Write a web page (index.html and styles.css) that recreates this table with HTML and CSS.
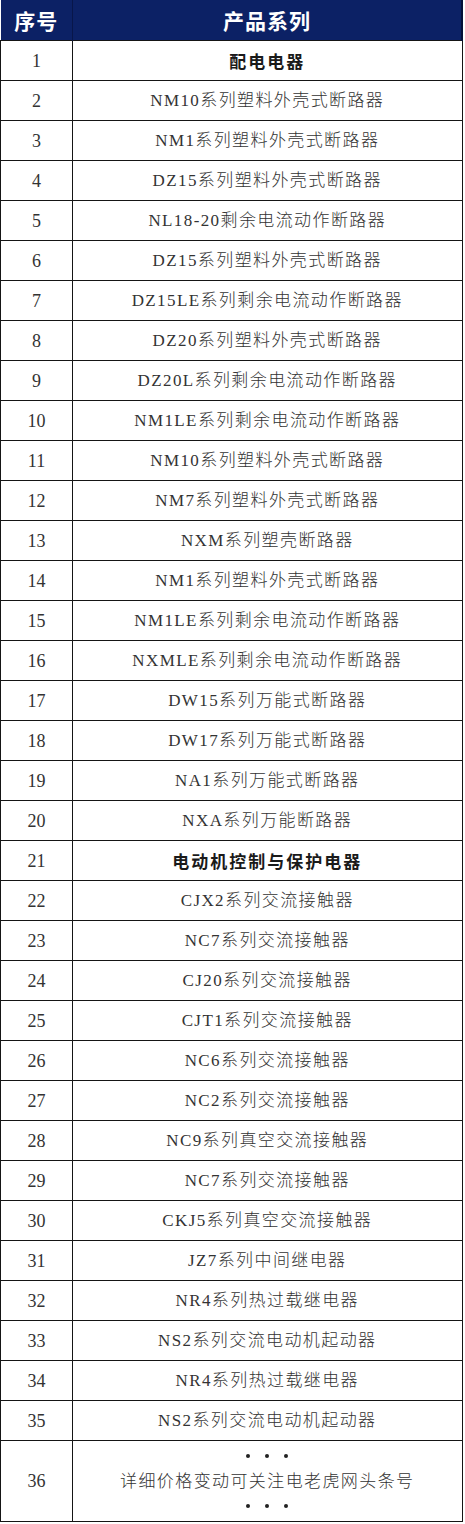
FILE: index.html
```html
<!DOCTYPE html>
<html lang="zh-CN">
<head>
<meta charset="utf-8">
<title>产品系列</title>
<link rel="stylesheet" href="styles.css">
</head>
<body>
<table class="tbl">
  <colgroup><col class="c-no"><col class="c-name"></colgroup>
  <thead>
    <tr class="head"><th>序号</th><th>产品系列</th></tr>
  </thead>
  <tbody>
    <tr><td class="no">1</td><td class="name cat">配电电器</td></tr>
    <tr><td class="no">2</td><td class="name">NM10系列塑料外壳式断路器</td></tr>
    <tr><td class="no">3</td><td class="name">NM1系列塑料外壳式断路器</td></tr>
    <tr><td class="no">4</td><td class="name">DZ15系列塑料外壳式断路器</td></tr>
    <tr><td class="no">5</td><td class="name">NL18-20剩余电流动作断路器</td></tr>
    <tr><td class="no">6</td><td class="name">DZ15系列塑料外壳式断路器</td></tr>
    <tr><td class="no">7</td><td class="name">DZ15LE系列剩余电流动作断路器</td></tr>
    <tr><td class="no">8</td><td class="name">DZ20系列塑料外壳式断路器</td></tr>
    <tr><td class="no">9</td><td class="name">DZ20L系列剩余电流动作断路器</td></tr>
    <tr><td class="no">10</td><td class="name">NM1LE系列剩余电流动作断路器</td></tr>
    <tr><td class="no">11</td><td class="name">NM10系列塑料外壳式断路器</td></tr>
    <tr><td class="no">12</td><td class="name">NM7系列塑料外壳式断路器</td></tr>
    <tr><td class="no">13</td><td class="name">NXM系列塑壳断路器</td></tr>
    <tr><td class="no">14</td><td class="name">NM1系列塑料外壳式断路器</td></tr>
    <tr><td class="no">15</td><td class="name">NM1LE系列剩余电流动作断路器</td></tr>
    <tr><td class="no">16</td><td class="name">NXMLE系列剩余电流动作断路器</td></tr>
    <tr><td class="no">17</td><td class="name">DW15系列万能式断路器</td></tr>
    <tr><td class="no">18</td><td class="name">DW17系列万能式断路器</td></tr>
    <tr><td class="no">19</td><td class="name">NA1系列万能式断路器</td></tr>
    <tr><td class="no">20</td><td class="name">NXA系列万能断路器</td></tr>
    <tr><td class="no">21</td><td class="name cat">电动机控制与保护电器</td></tr>
    <tr><td class="no">22</td><td class="name">CJX2系列交流接触器</td></tr>
    <tr><td class="no">23</td><td class="name">NC7系列交流接触器</td></tr>
    <tr><td class="no">24</td><td class="name">CJ20系列交流接触器</td></tr>
    <tr><td class="no">25</td><td class="name">CJT1系列交流接触器</td></tr>
    <tr><td class="no">26</td><td class="name">NC6系列交流接触器</td></tr>
    <tr><td class="no">27</td><td class="name">NC2系列交流接触器</td></tr>
    <tr><td class="no">28</td><td class="name">NC9系列真空交流接触器</td></tr>
    <tr><td class="no">29</td><td class="name">NC7系列交流接触器</td></tr>
    <tr><td class="no">30</td><td class="name">CKJ5系列真空交流接触器</td></tr>
    <tr><td class="no">31</td><td class="name">JZ7系列中间继电器</td></tr>
    <tr><td class="no">32</td><td class="name">NR4系列热过载继电器</td></tr>
    <tr><td class="no">33</td><td class="name">NS2系列交流电动机起动器</td></tr>
    <tr><td class="no">34</td><td class="name">NR4系列热过载继电器</td></tr>
    <tr><td class="no">35</td><td class="name">NS2系列交流电动机起动器</td></tr>
    <tr class="last">
      <td class="no">36</td>
      <td class="name">
        <div class="dots"><span></span><span></span><span></span></div>
        <div class="note">详细价格变动可关注电老虎网头条号</div>
        <div class="dots"><span></span><span></span><span></span></div>
      </td>
    </tr>
  </tbody>
</table>
</body>
</html>
```

FILE: styles.css
```css
html, body {
  margin: 0;
  padding: 0;
  background: #ffffff;
}

.tbl {
  border-collapse: collapse;
  table-layout: fixed;
  width: 463px;
  color: #2a2a2a;
}

.c-no { width: 72px; }

.head th {
  height: 40px;
  padding: 0;
  background: #0c2165;
  color: #ffffff;
  font-family: "Noto Sans CJK SC", sans-serif;
  font-weight: 700;
  font-size: 21px;
  letter-spacing: 1px;
  line-height: 40px;
  border-right: 1px solid #08164a;
}

.head th:last-child {
  border-right: 2px solid #061038;
}

td {
  height: 39px;
  padding: 0;
  border: 1px solid #151515;
  text-align: center;
  vertical-align: middle;
  font-size: 18px;
  line-height: 24px;
}

.no {
  font-family: "Liberation Serif", "Noto Sans CJK SC", serif;
  font-size: 18px;
  color: #333333;
}

.name {
  letter-spacing: 1.4px;
  font-size: 17px;
  font-family: "Liberation Serif", "Noto Sans CJK SC", serif;
  color: #333333;
  font-weight: 300;
}

.cat {
  font-family: "Noto Sans CJK SC", sans-serif;
  font-weight: 700;
  letter-spacing: 2px;
  color: #1a1a1a;
}

.last td {
  height: 80px;
}

.dots {
  display: flex;
  justify-content: center;
  gap: 15px;
  height: 25px;
  align-items: center;
}

.dots span {
  width: 4px;
  height: 4px;
  border-radius: 50%;
  background: #222222;
}

.note {
  height: 25px;
  line-height: 25px;
}
```
